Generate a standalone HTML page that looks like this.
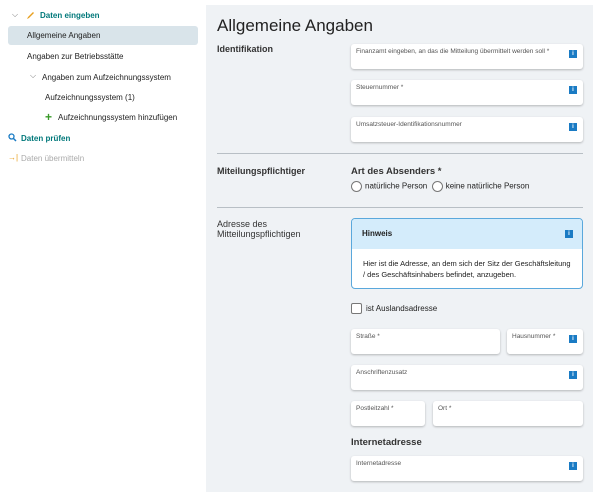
<!DOCTYPE html>
<html><head><meta charset="utf-8"><style>
*{box-sizing:border-box;margin:0;padding:0}
body{width:600px;height:500px;background:#fff;font-family:"Liberation Sans","DejaVu Sans",sans-serif;color:#222;position:relative;overflow:hidden}
.a{position:absolute;white-space:nowrap}
.s{font-size:8px}
.teal{color:#00787a;font-weight:bold}
#panel{position:absolute;left:206px;top:5px;width:387px;height:487px;background:#eff2f5}
.f{position:absolute;background:#fff;border-radius:3px;box-shadow:0 1px 2px rgba(0,0,0,.25)}
.f span{position:absolute;left:5px;top:4px;font-size:6.5px;color:#555}
.i{position:absolute;right:6px;top:6px;width:8px;height:8px;background:#1a7bc4;color:#fff;font-size:6px;font-weight:bold;text-align:center;line-height:8px}
.h{font-size:9px;font-weight:bold;color:#333}
.rad{display:inline-block;width:11px;height:11px;border:1px solid #777;border-radius:50%;vertical-align:middle;background:#fff;margin-right:3px}
.line{position:absolute;left:217px;width:366px;height:1px;background:#b8bfc5}
</style></head><body>
<div class="a s" style="left:12px;top:10px;color:#777">⌵</div>
<svg class="a" style="left:26px;top:11px" width="9" height="9"><path d="M1 8 L2 6 L7 1 L8 2 L3 7 Z" fill="#e8a020"/></svg>
<div class="a s teal" style="left:40px;top:11px">Daten eingeben</div>
<div class="a" style="left:8px;top:26px;width:190px;height:19px;background:#d9e4ea;border-radius:3px"></div>
<div class="a s" style="left:27px;top:31px">Allgemeine Angaben</div>
<div class="a s" style="left:27px;top:52px">Angaben zur Betriebsstätte</div>
<div class="a s" style="left:30px;top:71px;color:#777">⌵</div>
<div class="a s" style="left:42px;top:73px">Angaben zum Aufzeichnungssystem</div>
<div class="a s" style="left:45px;top:93px">Aufzeichnungssystem (1)</div>
<div class="a" style="left:45px;top:110px;font-size:12px;font-weight:bold;color:#3a9a2a">+</div>
<div class="a s" style="left:58px;top:113px">Aufzeichnungssystem hinzufügen</div>
<svg class="a" style="left:8px;top:133px" width="9" height="9"><circle cx="3.5" cy="3.5" r="2.5" stroke="#1a7bc4" fill="none" stroke-width="1.3"/><path d="M5.5 5.5 L8 8" stroke="#1a7bc4" stroke-width="1.5"/></svg>
<div class="a s teal" style="left:21px;top:134px">Daten prüfen</div>
<div class="a s" style="left:8px;top:153px;color:#e8a020">→|</div>
<div class="a s" style="left:21px;top:154px;color:#aaa">Daten übermitteln</div>

<div id="panel"></div>
<div class="a" style="left:217px;top:16px;font-size:17px;color:#222">Allgemeine Angaben</div>
<div class="a h" style="left:217px;top:44px">Identifikation</div>
<div class="f" style="left:351px;top:44px;width:232px;height:25px"><span>Finanzamt eingeben, an das die Mitteilung übermittelt werden soll *</span><div class="i">i</div></div>
<div class="f" style="left:351px;top:80px;width:232px;height:25px"><span>Steuernummer *</span><div class="i">i</div></div>
<div class="f" style="left:351px;top:117px;width:232px;height:25px"><span>Umsatzsteuer-Identifikationsnummer</span><div class="i">i</div></div>
<div class="line" style="top:153px"></div>
<div class="a h" style="left:217px;top:166px">Miteilungspflichtiger</div>
<div class="a h" style="left:351px;top:166px;font-size:9.5px">Art des Absenders *</div>
<div class="a s" style="left:351px;top:181px"><span class="rad"></span>natürliche Person &nbsp;<span class="rad"></span>keine natürliche Person</div>
<div class="line" style="top:207px"></div>
<div class="a h" style="left:217px;top:219px;font-weight:normal;line-height:10px;font-size:9px">Adresse des<br>Mitteilungspflichtigen</div>
<div class="a" style="left:351px;top:218px;width:232px;height:71px;border:1px solid #5aa8dc;border-radius:4px;background:#fff;overflow:hidden">
<div style="height:30px;background:#d4ecfb;padding:10px 10px;font-size:8px;font-weight:bold">Hinweis</div>
<div class="i" style="top:11px;right:9px">i</div>
<div style="padding:9px 11px;font-size:7.5px;line-height:11px;white-space:normal">Hier ist die Adresse, an dem sich der Sitz der Geschäftsleitung / des Geschäftsinhabers befindet, anzugeben.</div></div>
<div class="a" style="left:351px;top:303px;width:11px;height:11px;border:1px solid #777;border-radius:2px;background:#fff"></div>
<div class="a s" style="left:366px;top:304px">ist Auslandsadresse</div>
<div class="f" style="left:351px;top:329px;width:149px;height:25px"><span>Straße *</span></div>
<div class="f" style="left:507px;top:329px;width:76px;height:25px"><span>Hausnummer *</span><div class="i">i</div></div>
<div class="f" style="left:351px;top:365px;width:232px;height:25px"><span>Anschriftenzusatz</span><div class="i">i</div></div>
<div class="f" style="left:351px;top:401px;width:74px;height:25px"><span>Postleitzahl *</span></div>
<div class="f" style="left:433px;top:401px;width:150px;height:25px"><span>Ort *</span></div>
<div class="a h" style="left:351px;top:437px;font-size:9.5px">Internetadresse</div>
<div class="f" style="left:351px;top:456px;width:232px;height:25px"><span>Internetadresse</span><div class="i">i</div></div>
</body></html>
